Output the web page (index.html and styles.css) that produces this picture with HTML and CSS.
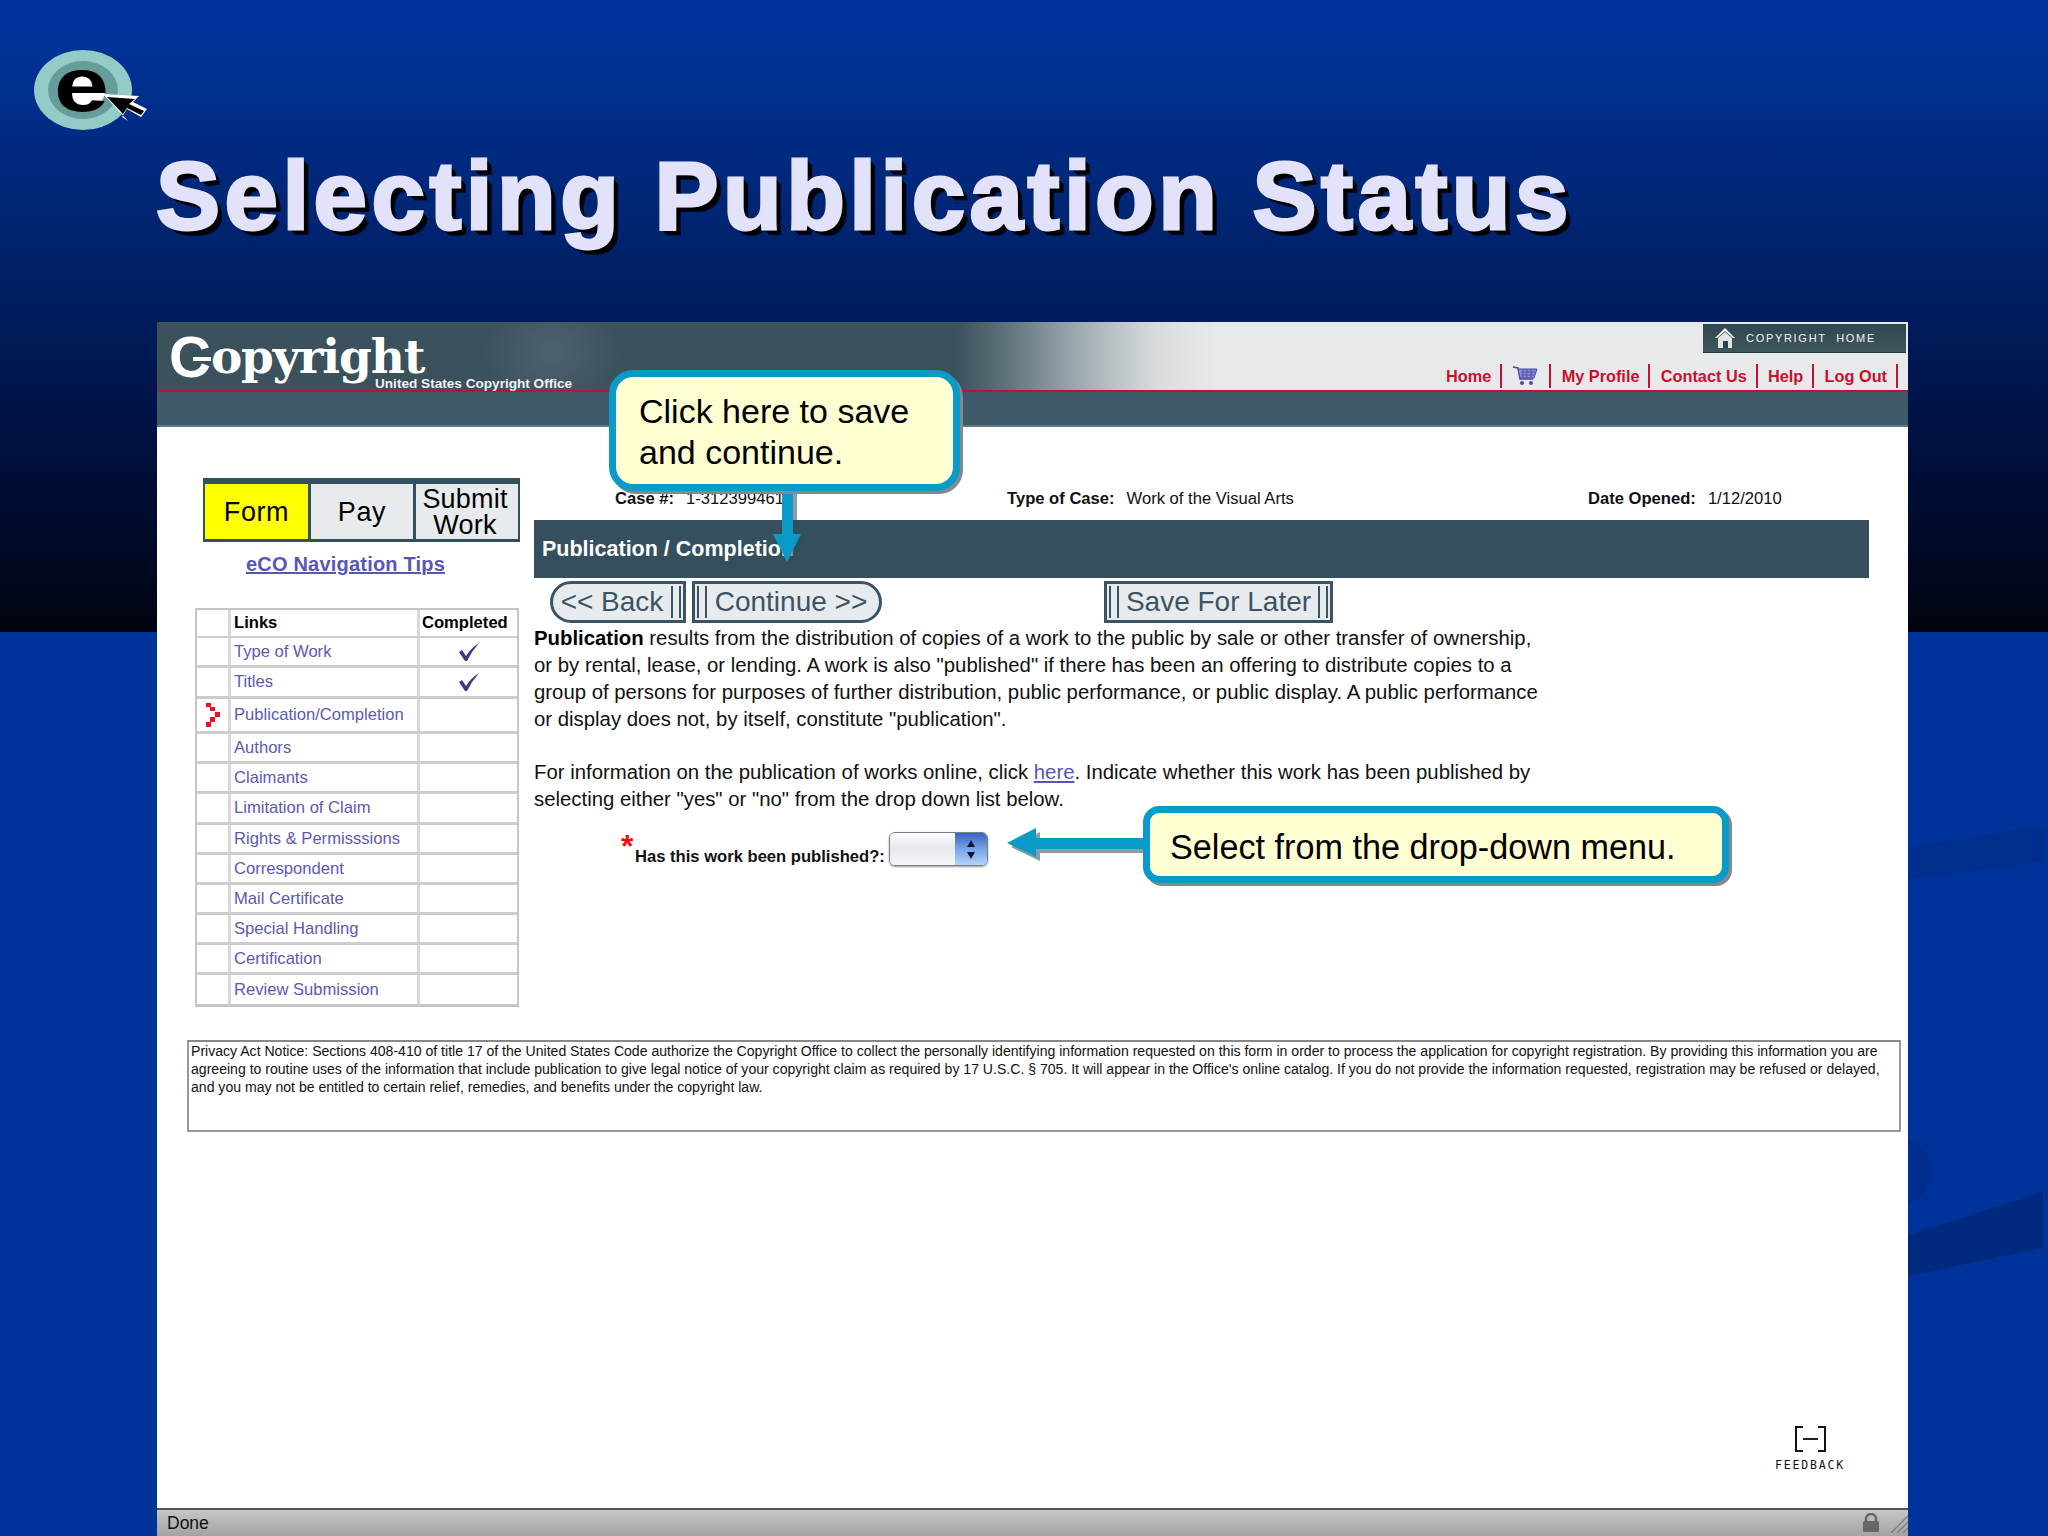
FILE: index.html
```html
<!DOCTYPE html>
<html lang="en">
<head>
<meta charset="utf-8">
<title>Selecting Publication Status</title>
<link rel="stylesheet" href="styles.css">
</head>
<body>
<div class="slide">
  <svg class="swooshes" width="2048" height="1536" viewBox="0 0 2048 1536" aria-hidden="true">
    <polygon class="sw1" points="1908,847 2043,826 2043,862 1908,879"/>
    <ellipse class="sw2" cx="1905" cy="1171" rx="26" ry="32"/>
    <polygon class="sw3" points="1908,1235 2043,1192 2043,1248 1908,1276"/>
  </svg>

  <header class="slide-head">
    <svg class="eco-logo" width="120" height="112" viewBox="30 20 120 112" aria-hidden="true">
      <ellipse cx="82" cy="90" rx="49" ry="40" fill="#93cbc7"/>
      <ellipse cx="82" cy="90" rx="35" ry="29" fill="#669d9a"/>
      <ellipse cx="81" cy="91" rx="23" ry="19" fill="#fff"/>
      <text class="eco-e" transform="translate(53,111) scale(1.3,1)">e</text>
      <path d="M103 95 L139 97 L133 103 L147 110 L141 118 L127 110 L122 118 L128 122 Z" fill="#fff" transform="translate(-1,-1)"/>
      <path d="M106 97 L134 99 L128 104 L143 111 L140 115 L126 108 L122 114 Z" fill="#000"/>
    </svg>
    <h1 class="slide-title">Selecting Publication Status</h1>
  </header>

  <main class="shot">
    <div class="site-head">
      <div class="site-top">
        <div class="brand">
          <div class="brand-word"><span class="brand-c">C</span><span class="brand-rest">opyright</span></div>
          <div class="brand-sub">United States Copyright Office</div>
        </div>
        <div class="site-right">
          <a class="home-btn">
            <svg width="22" height="22" viewBox="0 0 22 22" aria-hidden="true">
              <path d="M11 1 L21 11 L19 11 L11 4 L3 11 L1 11 Z" fill="#fff"/>
              <path d="M4 11 L11 5 L18 11 L18 21 L4 21 Z" fill="#dfe5e5"/>
              <rect x="9" y="14" width="5" height="7" fill="#2d444d"/>
            </svg>
            <span>COPYRIGHT&nbsp; HOME</span>
          </a>
          <nav class="site-nav">
            <a>Home</a>
            <a class="cart">
              <svg width="26" height="22" viewBox="0 0 26 22" aria-hidden="true">
                <path d="M1 2 L6 3 L8 14 L21 14" fill="none" stroke="#4a4aa8" stroke-width="1.5"/>
                <path d="M6 4 L25 4 L22 13 L8 13 Z" fill="#8a8ad0" stroke="#4a4aa8" stroke-width="1"/>
                <path d="M9 7 H23 M9 10 H22 M11 4 V13 M15 4 V13 M19 4 V13" stroke="#4a4aa8" stroke-width=".8"/>
                <circle cx="10" cy="18" r="2" fill="#4a4aa8"/>
                <circle cx="19" cy="18" r="2" fill="#4a4aa8"/>
              </svg>
            </a>
            <a>My Profile</a>
            <a>Contact Us</a>
            <a>Help</a>
            <a>Log Out</a>
          </nav>
        </div>
      </div>
      <div class="site-band"></div>
    </div>

    <div class="site-body">
      <aside class="side">
        <div class="tabs">
          <div class="tab tab-on">Form</div>
          <div class="tab">Pay</div>
          <div class="tab tab-two">Submit<br>Work</div>
        </div>
        <a class="tips">eCO Navigation Tips</a>
        <div class="links">
          <div class="row row-head"><div></div><div>Links</div><div>Completed</div></div>
          <div class="row r30"><div></div><a>Type of Work</a><div class="done"><svg class="check" width="24" height="20" viewBox="0 0 24 20" aria-hidden="true"><path d="M2 10 L5 8 L9 14 Q14 6 22 1 Q15 9 10 19 L8 19 Z"/></svg></div></div>
          <div class="row r31"><div></div><a>Titles</a><div class="done"><svg class="check" width="24" height="20" viewBox="0 0 24 20" aria-hidden="true"><path d="M2 10 L5 8 L9 14 Q14 6 22 1 Q15 9 10 19 L8 19 Z"/></svg></div></div>
          <div class="row r35"><div class="cur"><svg width="16" height="24" viewBox="0 0 16 24" aria-hidden="true"><path d="M1 0 h5 v4 h-5 Z M5 4 h5 v4 h-5 Z M10 9 h5 v5 h-5 Z M5 14 h5 v5 h-5 Z M1 19 h5 v5 h-5 Z" fill="#ee1122"/></svg></div><a>Publication/Completion</a><div></div></div>
          <div class="row r30"><div></div><a>Authors</a><div></div></div>
          <div class="row r30"><div></div><a>Claimants</a><div></div></div>
          <div class="row r31"><div></div><a>Limitation of Claim</a><div></div></div>
          <div class="row r30"><div></div><a>Rights &amp; Permisssions</a><div></div></div>
          <div class="row r30"><div></div><a>Correspondent</a><div></div></div>
          <div class="row r30"><div></div><a>Mail Certificate</a><div></div></div>
          <div class="row r30"><div></div><a>Special Handling</a><div></div></div>
          <div class="row r30"><div></div><a>Certification</a><div></div></div>
          <div class="row r29"><div></div><a>Review Submission</a><div></div></div>
        </div>
      </aside>

      <section class="form">
        <div class="case">
          <div class="case-cell"><b>Case #:</b><span>1-312399461</span></div>
          <div class="case-cell"><b>Type of Case:</b><span>Work of the Visual Arts</span></div>
          <div class="case-cell"><b>Date Opened:</b><span>1/12/2010</span></div>
        </div>
        <div class="section-bar">Publication / Completion</div>
        <div class="buttons">
          <button class="btn btn-back">&lt;&lt; Back</button>
          <button class="btn btn-next">Continue &gt;&gt;</button>
          <button class="btn btn-save">Save For Later</button>
        </div>
        <p class="copy"><b>Publication</b> results from the distribution of copies of a work to the public by sale or other transfer of ownership,<br>or by rental, lease, or lending. A work is also "published" if there has been an offering to distribute copies to a<br>group of persons for purposes of further distribution, public performance, or public display. A public performance<br>or display does not, by itself, constitute "publication".</p>
        <p class="copy copy-2">For information on the publication of works online, click <a>here</a>. Indicate whether this work has been published by<br>selecting either "yes" or "no" from the drop down list below.</p>
        <div class="question">
          <span class="star">*</span>
          <label>Has this work been published?:</label>
          <div class="select"><div class="select-field"></div><div class="stepper"><i class="up"></i><i class="down"></i></div></div>
        </div>
      </section>
    </div>

    <div class="privacy">Privacy Act Notice: Sections 408-410 of title 17 of the United States Code authorize the Copyright Office to collect the personally identifying information requested on this form in order to process the application for copyright registration. By providing this information you are<br>agreeing to routine uses of the information that include publication to give legal notice of your copyright claim as required by 17 U.S.C. § 705. It will appear in the Office's online catalog. If you do not provide the information requested, registration may be refused or delayed,<br>and you may not be entitled to certain relief, remedies, and benefits under the copyright law.</div>

    <div class="foot-space">
      <div class="feedback"><div class="fb-mark"><i></i></div><div class="fb-text">FEEDBACK</div></div>
    </div>

    <div class="status">
      <span>Done</span>
      <div class="status-icons">
        <svg width="18" height="20" viewBox="0 0 18 20" aria-hidden="true"><path d="M4 9 V6 a5 5 0 0 1 10 0 V9" fill="none" stroke="#666" stroke-width="2.4"/><rect x="1" y="8" width="16" height="11" rx="1.5" fill="#666"/></svg>
        <svg width="18" height="20" viewBox="0 0 18 20" aria-hidden="true"><path d="M1 20 L18 3 M7 20 L18 9 M13 20 L18 15" stroke="#777" stroke-width="1.2"/></svg>
      </div>
    </div>
  </main>

  <svg class="arrows" width="2048" height="1536" viewBox="0 0 2048 1536" aria-hidden="true">
    <g class="arrow-shadow" transform="translate(4,4)">
      <path d="M782 485 H793 V534 H801 L787 562 L773 534 H782 Z"/>
      <path d="M1150 838 H1036 V828 L1007 843 L1036 857 V849 H1150 Z"/>
    </g>
    <g class="arrow-fill">
      <path d="M782 485 H793 V534 H801 L787 562 L773 534 H782 Z"/>
      <path d="M1150 838 H1036 V828 L1007 843 L1036 857 V849 H1150 Z"/>
    </g>
  </svg>
  <div class="callout callout-save">Click here to save<br>and continue.</div>
  <div class="callout callout-menu">Select from the drop-down menu.</div>
</div>
</body>
</html>
```
FILE: styles.css
```css
* { box-sizing: border-box; }
html, body { margin: 0; padding: 0; }
body { width: 2048px; height: 1536px; overflow: hidden; font-family: "Liberation Sans", Arial, sans-serif; }

.slide {
  position: relative;
  width: 2048px;
  height: 1536px;
  display: flex;
  flex-direction: column;
  background:
    linear-gradient(to bottom, #003399 0, #003399 40px, #001e60 300px, #00144a 400px, #000a28 540px, #00040f 632px, #003399 632px, #003399 100%);
  overflow: hidden;
}

.swooshes { position: absolute; left: 0; top: 0; }
.sw1 { fill: #002e8c; }
.sw2 { fill: #002e8c; }
.sw3 { fill: #002a80; }

.slide-head { position: relative; height: 322px; flex: none; padding: 20px 0 0 31px; }
.eco-logo { display: block; }
.eco-e { font-family: "Liberation Sans", Arial, sans-serif; font-weight: 700; font-size: 76px; fill: #000; }
.slide-title {
  margin: 10px 0 0 125px;
  font-size: 96px;
  line-height: 108px;
  font-weight: 700;
  letter-spacing: 4.5px;
  color: #e2e2fa;
  -webkit-text-stroke: 3px #e2e2fa;
  white-space: nowrap;
  text-shadow: 1px 1px 0 #000, 2px 2px 0 #000, 3px 3px 0 #000, 4px 4px 0 #000, 5px 5px 0 #000, 6px 6px 0 #00071e;
}

.shot {
  position: relative;
  margin-left: 157px;
  width: 1751px;
  height: 1214px;
  flex: none;
  display: flex;
  flex-direction: column;
  background: #fff;
}

.site-head { flex: none; }
.site-top {
  height: 70px;
  display: flex;
  justify-content: space-between;
  border-bottom: 2px solid #b8152e;
  background:
    radial-gradient(ellipse 70px 60px at 395px 30px, rgba(110, 130, 140, .35), transparent),
    linear-gradient(to right, #3b515c 0, #3b515c 800px, #5f737c 850px, #a6b1b5 930px, #d9dcde 1000px, #e8e9eb 1060px);
}
.site-band { height: 35px; background: #3f5a69; border-bottom: 2px solid #5a7c80; }

.brand { padding: 11px 0 0 12px; color: #fff; position: relative; }
.brand-word { display: flex; align-items: baseline; line-height: 40px; height: 40px; }
.brand-c { position: relative; top: 4px; font-weight: 700; font-size: 58px; line-height: 40px; }
.brand-c::after { content: ""; position: absolute; left: 24px; top: 20px; width: 18px; height: 4px; background: #fff; }
.brand-rest { font-family: "DejaVu Serif", serif; font-weight: 700; font-size: 47px; line-height: 36px; letter-spacing: -1.2px; }
.brand-sub { font-weight: 700; font-size: 13.6px; line-height: 14px; margin: 4px 0 0 206px; white-space: nowrap; color: #f1f3f4; }

.site-right { display: flex; flex-direction: column; align-items: flex-end; padding: 2px 2px 0 0; }
.home-btn {
  width: 203px;
  height: 30px;
  display: flex;
  align-items: center;
  gap: 10px;
  padding-left: 11px;
  background: linear-gradient(to bottom, #2f4650, #40575f);
  border-bottom: 1px solid #22363d;
  color: #f3f5f5;
  font-size: 11px;
  letter-spacing: 1.7px;
  white-space: nowrap;
}
.site-nav { display: flex; align-items: center; margin-top: 10px; padding-right: 8px; height: 28px; }
.site-nav a {
  display: flex;
  align-items: center;
  height: 24px;
  padding: 0 9px 0 10.3px;
  border-right: 2px solid #c8102e;
  color: #c8102e;
  font-size: 16.3px;
  font-weight: 700;
  white-space: nowrap;
}
.site-nav .cart { padding: 0 11px 0 10px; }

.site-body { flex: none; display: flex; padding: 50px 0 0 38px; height: 579px; }
.side { width: 324px; flex: none; }
.tabs {
  margin: 1px 0 0 8px;
  width: 317px;
  height: 64px;
  display: grid;
  grid-template-columns: 103px 102px 102px;
  gap: 3px;
  padding: 6px 3px 3px 2px;
  background: #33505f;
  font-size: 27px;
  color: #000;
}
.tab { display: flex; align-items: center; justify-content: center; padding-top: 2px; background: #e8ebee; text-align: center; letter-spacing: .6px; }
.tab-on { background: #ffff00; }
.tab-two { line-height: 26px; letter-spacing: .2px; padding: 0 4px 0 0; }
.tips { display: block; margin: 10px 0 0 0; padding-left: 51px; font-size: 20px; line-height: 24px; font-weight: 700; color: #5656b8; text-decoration: underline; letter-spacing: .2px; }

.links { margin-top: 32px; border: 2px solid #c6c6c8; border-bottom-width: 3px; width: 324px; }
.row { display: grid; grid-template-columns: 34px 189px 1fr; border-bottom: 3px solid #cdcdcf; font-size: 16.6px; color: #5a5ab4; }
.row:last-child { border-bottom: 0; }
.row > * { display: flex; align-items: center; border-right: 3px solid #d8d8da; }
.row > *:last-child { border-right: 0; }
.row > a { padding-left: 3px; white-space: nowrap; }
.row-head { height: 28px; color: #000; font-weight: 700; border-bottom-width: 2px; }
.row-head > *:nth-child(2) { padding-left: 3px; }
.row-head > *:nth-child(3) { padding-left: 2px; white-space: nowrap; }
.r29 { height: 29px; }
.r30 { height: 30px; }
.r31 { height: 31px; }
.r35 { height: 35px; }
.done { justify-content: center; padding-right: 0; }
.check path { fill: #3b3b80; }
.cur { padding-left: 8px; }

.form { margin-left: 15px; flex: 1; min-width: 0; display: flex; flex-direction: column; }
.case {
  height: 43px;
  display: grid;
  grid-template-columns: 392px 581px 1fr;
  padding: 12px 0 0 81px;
  font-size: 16.6px;
  line-height: 20px;
  color: #111;
}
.case-cell { display: flex; gap: 12px; white-space: nowrap; }
.section-bar {
  width: 1335px;
  height: 58px;
  padding: 1px 0 0 8px;
  display: flex;
  align-items: center;
  background: #354f5f;
  color: #fff;
  font-size: 21.5px;
  font-weight: 700;
}
.buttons { display: flex; height: 42px; margin-top: 3px; padding-left: 16px; }
.btn {
  height: 42px;
  margin: 0;
  border: 3px solid #3a5464;
  background: #e8ebee;
  color: #3a5464;
  font-family: inherit;
  font-size: 28px;
  line-height: 34px;
  padding: 0;
  white-space: nowrap;
  position: relative;
}
.btn::before, .btn::after { content: ""; position: absolute; top: 2px; bottom: 2px; width: 6px; border-left: 2px solid #3a5464; border-right: 2px solid #3a5464; }
.btn-back { width: 136px; border-radius: 21px 0 0 21px; padding: 0 12px 0 0; }
.btn-back::before { display: none; }
.btn-back::after { right: 2px; }
.btn-next { width: 190px; margin-left: 6px; border-radius: 0 21px 21px 0; padding: 0 0 0 8px; }
.btn-next::before { left: 2px; }
.btn-next::after { display: none; }
.btn-save { width: 229px; margin-left: 222px; }
.btn-save::before { left: 2px; }
.btn-save::after { right: 2px; }

.copy { margin: 2px 0 0; font-size: 20.35px; line-height: 27px; color: #111; white-space: nowrap; }
.copy b { color: #000; }
.copy-2 { margin-top: 26px; }
.copy a { color: #5656b8; text-decoration: underline; }

.question { position: relative; display: flex; align-items: flex-end; height: 36px; margin-top: 17px; padding-left: 101px; }
.star { position: absolute; left: 87px; top: 0; color: #e81010; font-size: 32px; font-weight: 700; line-height: 32px; }
.question label { font-size: 16.6px; font-weight: 700; color: #111; line-height: 20px; margin: 0 4px -1px 0; white-space: nowrap; }
.select { width: 99px; height: 34px; display: flex; border: 1px solid #7a7f8c; border-radius: 6px; overflow: hidden; box-shadow: 0 1px 2px #999; }
.select-field { flex: 1; background: linear-gradient(to bottom, #fff, #e6e8ee 45%, #f4f5f8); }
.stepper { position: relative; width: 32px; background: linear-gradient(to bottom, #3a62c0, #76a4e8 50%, #aed6f8); }
.stepper i { position: absolute; left: 12px; width: 0; height: 0; border-left: 4px solid transparent; border-right: 4px solid transparent; }
.up { top: 7px; border-bottom: 7px solid #101830; }
.down { top: 19px; border-top: 7px solid #101830; }

.privacy {
  flex: none;
  margin: 34px 0 0 30px;
  width: 1714px;
  height: 92px;
  border: 2px solid #999;
  border-top-color: #888;
  padding: 0 0 0 2px;
  font-size: 14.07px;
  line-height: 18px;
  color: #111;
  white-space: nowrap;
}

.foot-space { flex: 1; display: flex; justify-content: flex-end; align-items: flex-end; padding: 0 62px 36px 0; }
.feedback { width: 72px; display: flex; flex-direction: column; align-items: center; }
.fb-mark { position: relative; width: 31px; height: 26px; border-left: 2px solid #111; border-right: 2px solid #111; }
.fb-mark::before, .fb-mark::after { content: ""; position: absolute; width: 6px; left: 0; border-top: 2px solid #111; }
.fb-mark::before { top: 0; box-shadow: 21px 0 0 #111; }
.fb-mark::after { bottom: 0; box-shadow: 21px 0 0 #111; }
.fb-mark i { position: absolute; left: 6px; right: 6px; top: 12px; border-top: 2px solid #222; }
.fb-text { margin-top: 6px; font-family: "DejaVu Sans Mono", monospace; font-size: 11.5px; line-height: 14px; letter-spacing: 1.8px; color: #111; white-space: nowrap; }

.status {
  flex: none;
  height: 28px;
  display: flex;
  align-items: center;
  justify-content: space-between;
  padding: 0 0 0 10px;
  background: linear-gradient(to bottom, #c6c6c6, #a3a3a3);
  border-top: 2px solid #555;
  font-size: 17.5px;
  color: #111;
}
.status-icons { display: flex; align-items: center; gap: 10px; }

.arrows { position: absolute; left: 0; top: 0; pointer-events: none; }
.arrow-shadow path { fill: #2c4a5c; opacity: .55; }
.arrow-fill path { fill: #0a9ac8; }

.callout {
  position: absolute;
  background: #ffffd2;
  border: 7px solid #0a9ac8;
  color: #000;
  box-shadow: 3px 3px 0 #7f8a92;
  white-space: nowrap;
}
.callout-save {
  left: 609px;
  top: 370px;
  width: 351px;
  height: 121px;
  border-radius: 24px;
  padding: 14px 0 0 23px;
  font-size: 34px;
  line-height: 41px;
}
.callout-menu {
  left: 1143px;
  top: 806px;
  width: 586px;
  height: 77px;
  border-radius: 16px;
  padding: 13px 0 0 20px;
  font-size: 34.2px;
  line-height: 42px;
}
```
